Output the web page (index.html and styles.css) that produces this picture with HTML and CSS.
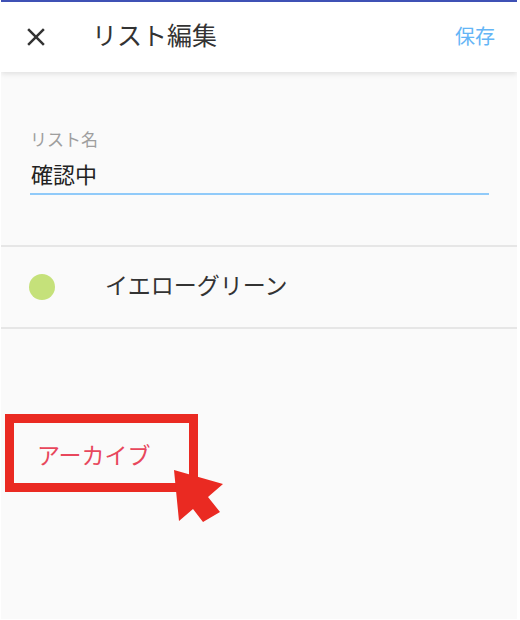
FILE: index.html
```html
<!DOCTYPE html>
<html lang="ja">
<head>
<meta charset="utf-8">
<title>リスト編集</title>
<link rel="stylesheet" href="styles.css">
</head>
<body>
<div class="app">
  <header class="topbar">
    <svg class="close" viewBox="0 0 24 24" width="30" height="30" aria-hidden="true">
      <path d="M19 6.41L17.59 5 12 10.59 6.41 5 5 6.41 10.59 12 5 17.59 6.41 19 12 13.41 17.59 19 19 17.59 13.41 12z" fill="#333"/>
    </svg>
    <h1 class="title">リスト編集</h1>
    <span class="save">保存</span>
  </header>

  <section class="field">
    <div class="label">リスト名</div>
    <div class="input">確認中</div>
  </section>

  <div class="row">
    <span class="dot"></span>
    <span class="row-text">イエローグリーン</span>
  </div>

  <div class="archive">アーカイブ</div>

  <div class="highlight"></div>
  <svg class="pointer" viewBox="0 0 60 60" width="60" height="60" aria-hidden="true">
    <polygon points="4,0 53,14 38,27 50,42 33,52 23,39 9,51" fill="#ea2a22"/>
  </svg>
</div>
</body>
</html>
```

FILE: styles.css
```css
* { box-sizing: border-box; }
html, body { margin: 0; padding: 0; background: #ffffff; }
body {
  font-family: Roboto, "Noto Sans CJK JP", "Noto Sans", sans-serif;
  color: #333;
}
.app {
  position: relative;
  width: 516px;
  height: 619px;
  margin-left: 1px;
  background: #fafafa;
  overflow: hidden;
}
.topbar {
  position: relative;
  display: flex;
  align-items: center;
  height: 72px;
  border-top: 2px solid #3f51b5;
  background: #ffffff;
  padding: 0 22px 0 20px;
  box-shadow: 0 2px 5px rgba(0,0,0,0.10);
}
.close { flex: none; }
.title {
  margin: 0 0 0 41px;
  font-size: 25px;
  font-weight: 400;
  color: #333;
  flex: 1;
  line-height: 30px;
}
.save {
  font-size: 20px;
  color: #64b5f6;
  line-height: 26px;
}
.field {
  padding: 58px 28px 0 29px;
}
.label {
  font-size: 17px;
  line-height: 20px;
  color: #9e9e9e;
}
.input {
  margin-top: 12px;
  font-size: 22px;
  line-height: 28px;
  color: #222;
  padding: 0 0 3px 1px;
  border-bottom: 2px solid #90caf9;
}
.row {
  margin-top: 50px;
  display: flex;
  align-items: center;
  height: 84px;
  border-top: 2px solid #e6e6e6;
  border-bottom: 2px solid #e6e6e6;
  padding-left: 28px;
}
.dot {
  width: 26px;
  height: 26px;
  border-radius: 50%;
  background: #c5e17a;
  flex: none;
}
.row-text {
  margin-left: 50px;
  font-size: 23px;
  line-height: 28px;
  color: #333;
}
.archive {
  margin: 114px 0 0 36px;
  font-size: 23px;
  line-height: 28px;
  color: #e8475c;
}
.highlight {
  position: absolute;
  left: 4px;
  top: 414px;
  width: 193px;
  height: 78px;
  border: 9px solid #ea2a22;
}
.pointer {
  position: absolute;
  left: 169px;
  top: 470px;
}
```
